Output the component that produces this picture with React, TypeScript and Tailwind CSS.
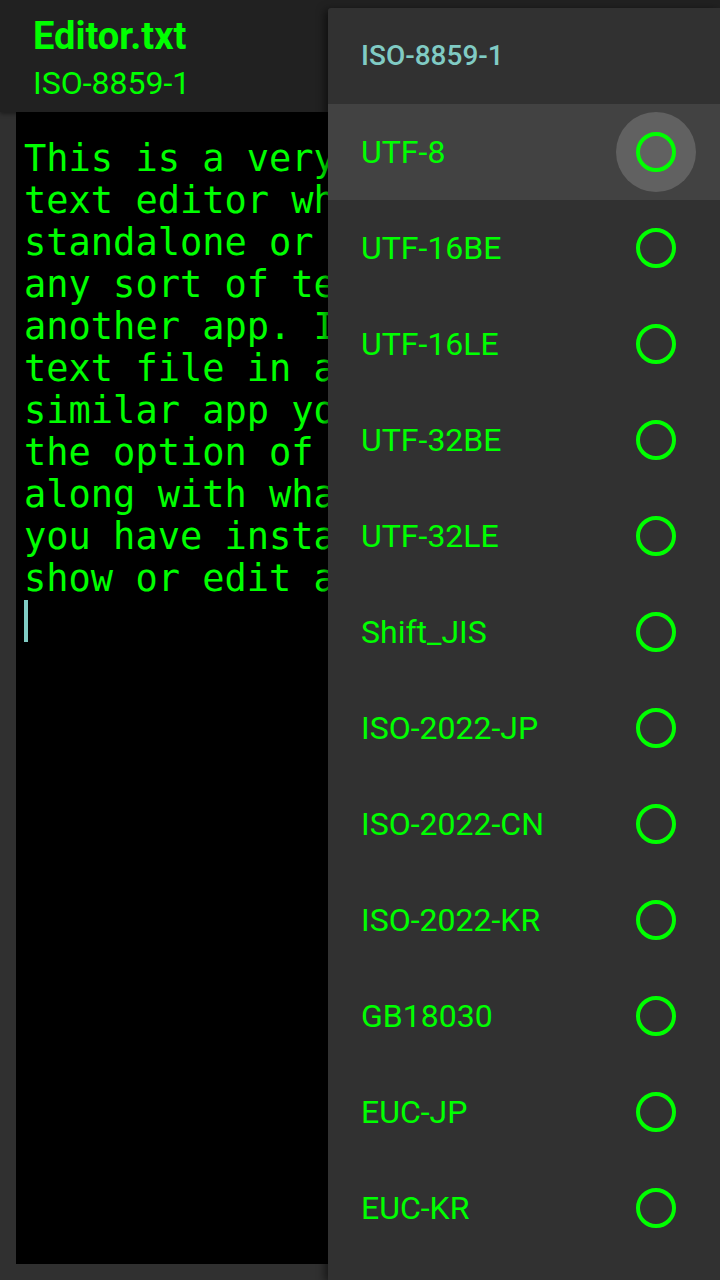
const GREEN = 'text-[#00ff00]';

const lines = [
  'This is a very simple',
  'text editor which can be used',
  'standalone or for editing',
  'any sort of text file from',
  'another app. If you open a',
  'text file in a file manager or',
  'similar app you should see',
  'the option of Editor listed',
  'along with whatever other apps',
  'you have installed that can',
  'show or edit a text file.',
];

const charsets = [
  'UTF-8',
  'UTF-16BE',
  'UTF-16LE',
  'UTF-32BE',
  'UTF-32LE',
  'Shift_JIS',
  'ISO-2022-JP',
  'ISO-2022-CN',
  'ISO-2022-KR',
  'GB18030',
  'EUC-JP',
  'EUC-KR',
];

function Radio() {
  return <span className="block h-10 w-10 rounded-full border-4 border-[#00ff00]" />;
}

export default function App() {
  return (
    <div
      className="relative flex h-[1280px] w-[720px] flex-col overflow-hidden bg-[#303030]"
      style={{ fontFamily: 'Roboto, "Noto Sans", sans-serif' }}
    >
      {/* Toolbar */}
      <div className="z-10 flex h-[112px] shrink-0 flex-col bg-[#212121] pl-[33px] pt-[14px] shadow-[0_2px_4px_rgba(0,0,0,0.4)]">
        <div className={`text-[38px] font-bold leading-[44px] ${GREEN}`}>Editor.txt</div>
        <div className={`mt-[7px] text-[32px] leading-[36px] ${GREEN}`}>ISO-8859-1</div>
      </div>

      {/* Editor */}
      <div className="flex flex-1 px-4 pb-4">
        <div
          className={`flex-1 overflow-hidden bg-black pl-[8px] pt-[26px] text-[37px] leading-[42px] ${GREEN}`}
          style={{ fontFamily: '"DejaVu Sans Mono", "Liberation Mono", monospace' }}
        >
          {lines.map((l) => (
            <div key={l} className="whitespace-pre">
              {l}
            </div>
          ))}
          <div className="h-[42px] w-1 bg-[#80cbc4]" />
        </div>
      </div>

      {/* Charset menu */}
      <div className="absolute bottom-0 left-[328px] right-0 top-2 z-20 rounded-tl-[3px] bg-[#313131] shadow-[-3px_2px_8px_rgba(0,0,0,0.55)]">
        <div className="flex h-24 items-center pl-[33px] text-[28px] font-medium text-[#80cbc4]">ISO-8859-1</div>
        {charsets.map((c, i) => (
          <div
            key={c}
            className={`flex h-24 items-center justify-between pl-[33px] pr-[44px] ${i === 0 ? 'bg-[#424242]' : ''}`}
          >
            <span className={`text-[32px] ${GREEN}`}>{c}</span>
            <span className="relative flex h-10 w-10 items-center justify-center">
              {i === 0 && <span className="absolute -inset-5 rounded-full bg-[#616161]" />}
              <span className="relative">
                <Radio />
              </span>
            </span>
          </div>
        ))}
      </div>
    </div>
  );
}
